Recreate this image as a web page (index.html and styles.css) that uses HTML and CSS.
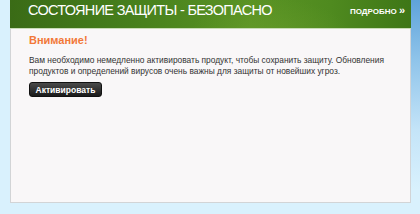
FILE: index.html
```html
<!DOCTYPE html>
<html lang="ru">
<head>
<meta charset="utf-8">
<link rel="stylesheet" href="styles.css">
</head>
<body>
<div class="page">
  <div class="panel">
    <div class="header">
      <h1 class="title">СОСТОЯНИЕ ЗАЩИТЫ - БЕЗОПАСНО</h1>
      <a class="more" href="#">ПОДРОБНО <span class="arrows">»</span></a>
    </div>
    <div class="content">
      <h2 class="warn">Внимание!</h2>
      <p class="text">Вам необходимо немедленно активировать продукт, чтобы сохранить защиту. Обновления<br>продуктов и определений вирусов очень важны для защиты от новейших угроз.</p>
      <button class="btn">Активировать</button>
    </div>
  </div>
</div>
</body>
</html>
```
FILE: styles.css
```css
html, body {
  margin: 0;
  padding: 0;
}
body {
  width: 420px;
  height: 214px;
  overflow: hidden;
  font-family: "Liberation Sans", Arial, sans-serif;
  background: linear-gradient(to right, #d9f1fd 0, #d9f1fd 411px, transparent 411px),
              linear-gradient(to bottom, #5fa3da 0, #8fc4ea 60px, #c4e4f8 130px, #d9f1fd 190px);
}
.page {
  padding: 0 9px 10px 10px;
}
.panel {
  height: 203px;
  box-sizing: border-box;
  border: 1px solid #d2d4d6;
  border-top: none;
  background: #f9f7f8;
  display: flex;
  flex-direction: column;
}
.header {
  height: 29px;
  box-sizing: border-box;
  border-bottom: 1px solid #c9dcb8;
  background:
    radial-gradient(ellipse 120px 60px at 260px 40px, rgba(120,170,50,0.35), transparent 70%),
    linear-gradient(to right, #3a6b16 0, #467f1c 30%, #5a9324 60%, #4f8a1f 80%, #3e7617 100%);
  display: flex;
  align-items: center;
  justify-content: space-between;
  padding: 0 6px 8px 18px;
  margin: 0 -1px;
}
.title {
  margin: 0;
  font-size: 14.5px;
  font-weight: normal;
  color: #ffffff;
  letter-spacing: -0.7px;
}
.more {
  color: #ffffff;
  font-size: 8px;
  font-weight: bold;
  text-decoration: none;
}
.arrows {
  font-size: 11px;
}
.content {
  padding: 5px 18px 0 18px;
}
.warn {
  margin: 0;
  font-size: 11px;
  font-weight: bold;
  color: #f27838;
}
.text {
  margin: 9px 0 0 0;
  font-size: 8.4px;
  line-height: 11px;
  color: #333333;
}
.btn {
  display: block;
  margin-top: 5px;
  width: 73px;
  height: 15px;
  padding: 0;
  border: 1px solid #111;
  border-radius: 3px;
  background: linear-gradient(to bottom, #4a4a4a, #1a1a1a);
  color: #fff;
  font-family: "Liberation Sans", Arial, sans-serif;
  font-size: 8.5px;
  font-weight: bold;
}
```
